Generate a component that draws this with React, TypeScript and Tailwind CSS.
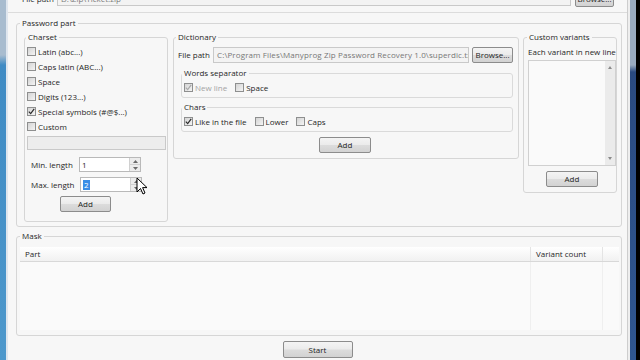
import React from "react";

const Check = ({ checked = false, disabled = false }: { checked?: boolean; disabled?: boolean }) => (
  <span className="w-[9px] h-[9px] shrink-0 border border-[#8e8f8f] bg-[linear-gradient(135deg,#d4d4d4,#f4f4f4)] flex items-center justify-center">
    {checked && (
      <svg width="7" height="7" viewBox="0 0 7 7">
        <path d="M0.8 3.6 L2.7 5.6 L6.2 0.9" stroke={disabled ? "#a8a8a8" : "#2a2a2a"} strokeWidth="1.2" fill="none" />
      </svg>
    )}
  </span>
);

const Btn = ({ children, className = "" }: { children: React.ReactNode; className?: string }) => (
  <div
    className={
      "flex items-center justify-center rounded-[2px] border border-[#8c8c8c] bg-[linear-gradient(#f4f4f4,#ebebeb_48%,#dcdcdc_52%,#d2d2d2)] text-[#1e1e1e] shrink-0 " +
      className
    }
  >
    {children}
  </div>
);

const CheckRow = ({ label, checked, disabled }: { label: string; checked?: boolean; disabled?: boolean }) => (
  <div className="flex items-center gap-[2px]">
    <Check checked={checked} disabled={disabled} />
    <span className={disabled ? "text-[#a4a4a4]" : ""}>{label}</span>
  </div>
);

const Spin = ({ value, selected }: { value: string; selected?: boolean }) => (
  <div className="w-[62px] h-[15px] border border-[#b9b9b9] bg-white flex items-stretch">
    <div className="flex-1 flex items-center pl-[2px]">
      {selected ? <span className="bg-[#3a8ee6] text-white px-[1px] leading-[10px]">{value}</span> : <span>{value}</span>}
    </div>
    <div className="w-[11px] flex flex-col border-l border-[#d0d0d0] bg-[#ececec]">
      <div className="flex-1 flex items-center justify-center border-b border-[#d0d0d0]">
        <svg width="5" height="3" viewBox="0 0 5 3"><path d="M0 3 L2.5 0 L5 3Z" fill="#6a6a6a" /></svg>
      </div>
      <div className="flex-1 flex items-center justify-center">
        <svg width="5" height="3" viewBox="0 0 5 3"><path d="M0 0 L2.5 3 L5 0Z" fill="#6a6a6a" /></svg>
      </div>
    </div>
  </div>
);

export default function App() {
  return (
    <div className="relative w-[640px] h-[360px] flex overflow-hidden bg-black font-['Open_Sans',sans-serif] text-[8px] leading-[10px] text-[#262626]">
      <div className="w-[6px] bg-[linear-gradient(180deg,#a8bccf_0px,#a8bccf_55px,#3f8bc4_65px,#4d98cc_100%)]" />
      <div className="w-[2px] bg-[#dfe6ee]" />
      <div className="flex-1 min-w-0 flex flex-col bg-[#f7f7f7]">
        {/* top file path row */}
        <div className="h-[16px] -mt-[9px] flex items-center shrink-0">
          <span className="ml-[14px] w-[35px]">File path</span>
          <div className="w-[514px] h-[14px] border border-[#c9c9c9] bg-[#f3f3f3] text-[#7a7a7a] flex items-center pl-[3px]">D:\Zip\Ticket.zip</div>
          <Btn className="ml-[4px] w-[39px] h-[16px]">Browse...</Btn>
        </div>
        <div className="mt-[5px] border-t border-[#dcdcdc] shrink-0" />

        {/* Password part */}
        <fieldset className="mt-[5px] ml-[8px] mr-[5px] border border-[#d6d6d6] rounded-[3px] shrink-0">
          <legend className="ml-[3px] px-[2px] leading-[10px]">Password part</legend>
          <div className="flex items-start gap-[5px] pl-[7px] pr-[4px] pt-[4px] pb-[4px]">
            {/* Charset */}
            <fieldset className="w-[144px] h-[190px] border border-[#d6d6d6] rounded-[3px] shrink-0">
              <legend className="ml-[1px] px-[2px] leading-[10px]">Charset</legend>
              <div className="flex flex-col pt-[2px] pl-[2px]">
                {[
                  ["Latin (abc...)", false],
                  ["Caps latin (ABC...)", false],
                  ["Space", false],
                  ["Digits (123...)", false],
                  ["Special symbols (#@$...)", true],
                  ["Custom", false],
                ].map(([l, c]) => (
                  <div key={l as string} className="h-[15px] flex items-center">
                    <CheckRow label={l as string} checked={c as boolean} />
                  </div>
                ))}
                <div className="mt-[2px] w-[139px] h-[14px] border border-[#c9c9c9] bg-[#ededed]" />
                <div className="mt-[7px] h-[15px] flex items-center">
                  <span className="pl-[4px] w-[52px]">Min. length</span>
                  <Spin value="1" />
                </div>
                <div className="mt-[5px] h-[15px] flex items-center">
                  <span className="pl-[4px] w-[53px]">Max. length</span>
                  <Spin value="2" selected />
                </div>
                <Btn className="mt-[4px] ml-[33px] w-[51px] h-[16px]">Add</Btn>
              </div>
            </fieldset>

            {/* Dictionary */}
            <fieldset className="w-[346px] h-[127px] border border-[#d6d6d6] rounded-[3px] shrink-0">
              <legend className="ml-[2px] px-[2px] leading-[10px]">Dictionary</legend>
              <div className="flex flex-col">
                <div className="mt-[4px] h-[17px] flex items-center">
                  <span className="pl-[4px] w-[39px]">File path</span>
                  <div className="w-[256px] h-[16px] border border-[#c9c9c9] bg-[#f3f3f3] text-[#777] flex items-center pl-[3px] whitespace-nowrap overflow-hidden tracking-[0.12px]">
                    C:\Program Files\Manyprog Zip Password Recovery 1.0\superdic.txt
                  </div>
                  <Btn className="ml-[3px] w-[41px] h-[16px]">Browse...</Btn>
                </div>
                <fieldset className="mt-[5px] ml-[7px] w-[332px] h-[30px] border border-[#dadada] rounded-[3px]">
                  <legend className="px-[2px] leading-[10px]">Words separator</legend>
                  <div className="h-[19px] flex items-center pl-[2px] gap-[8px]">
                    <CheckRow label="New line" checked disabled />
                    <CheckRow label="Space" />
                  </div>
                </fieldset>
                <fieldset className="mt-[4px] ml-[7px] w-[332px] h-[30px] border border-[#dadada] rounded-[3px]">
                  <legend className="px-[2px] leading-[10px]">Chars</legend>
                  <div className="h-[19px] flex items-center pl-[2px] gap-[8px]">
                    <CheckRow label="Like in the file" checked />
                    <CheckRow label="Lower" />
                    <CheckRow label="Caps" />
                  </div>
                </fieldset>
                <Btn className="mt-[5px] ml-[145px] w-[52px] h-[16px]">Add</Btn>
              </div>
            </fieldset>

            {/* Custom variants */}
            <fieldset className="ml-[-1px] w-[94px] h-[161px] border border-[#d6d6d6] rounded-[3px] shrink-0">
              <legend className="ml-[3px] px-[2px] leading-[10px]">Custom variants</legend>
              <div className="flex flex-col">
                <div className="mt-[5px] pl-[4px] whitespace-nowrap">Each variant in new line</div>
                <div className="mt-[3px] ml-[4px] w-[88px] h-[106px] border border-[#d0d0d0] bg-[#fafafa] flex justify-end">
                  <div className="w-[10px] bg-[#ebebeb] flex flex-col justify-between items-center py-[5px]">
                    <svg width="4" height="3" viewBox="0 0 4 3"><path d="M0 3 L2 0 L4 3Z" fill="#8a8a8a" /></svg>
                    <svg width="4" height="3" viewBox="0 0 4 3"><path d="M0 0 L2 3 L4 0Z" fill="#8a8a8a" /></svg>
                  </div>
                </div>
                <Btn className="mt-[5px] ml-[22px] w-[52px] h-[16px]">Add</Btn>
              </div>
            </fieldset>
          </div>
        </fieldset>

        {/* Mask */}
        <fieldset className="mt-[4px] ml-[8px] mr-[5px] h-[105px] border border-[#d6d6d6] rounded-[3px] shrink-0">
          <legend className="ml-[3px] px-[2px] leading-[10px]">Mask</legend>
          <div className="mt-[6px] ml-[3px] w-[599px] h-[83px] bg-[#fafafa] flex flex-col">
            <div className="h-[15px] flex border-b border-[#d8d8d8] bg-[linear-gradient(#ffffff,#f1f1f1)] shrink-0">
              <div className="w-[510px] pl-[5px] flex items-center">Part</div>
              <div className="w-[72px] pl-[5px] flex items-center border-l border-[#e4e4e4]">Variant count</div>
              <div className="flex-1 border-l border-[#e4e4e4]" />
            </div>
            <div className="flex-1 flex">
              <div className="w-[510px]" />
              <div className="w-[72px] border-l border-[#efefef]" />
              <div className="flex-1 border-l border-[#efefef]" />
            </div>
          </div>
        </fieldset>

        <Btn className="mt-[5px] mx-auto w-[70px] h-[17px]">Start</Btn>
      </div>
      <div className="w-[1px] bg-[#cdcdcd]" />
      <div className="w-[2px] bg-[#eeeeee]" />
      <div className="w-[6px] bg-[linear-gradient(180deg,#98aac0_0px,#98aac0_65px,#2a4a80_72px,#2f5690_100%)]" />
      <div className="w-[4px] bg-black" />

      {/* mouse cursor */}
      <svg className="absolute left-[136px] top-[177px]" width="12" height="19" viewBox="0 0 12 19">
        <path d="M1 1 L1 15 L4.5 11.5 L7 17 L9 16 L6.6 10.6 L11 10.6 Z" fill="#fff" stroke="#000" strokeWidth="1" strokeLinejoin="round" />
      </svg>
    </div>
  );
}
